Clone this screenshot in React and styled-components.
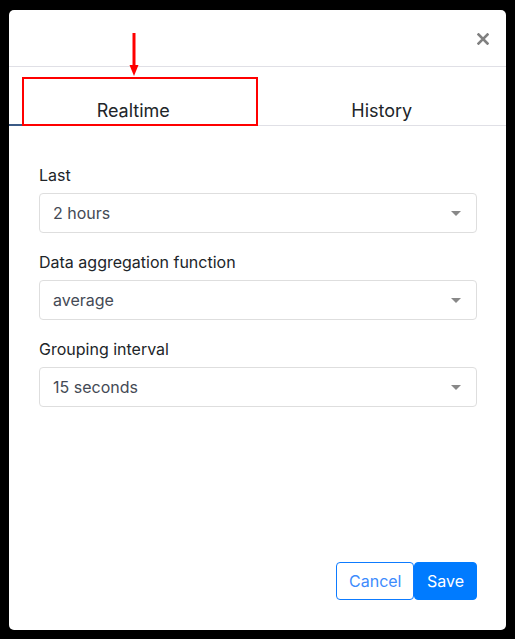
import React from "react";
import styled, { createGlobalStyle } from "styled-components";

const GlobalStyle = createGlobalStyle`
  html, body {
    margin: 0;
    padding: 0;
    background: #000;
    font-family: Inter, "Noto Sans", sans-serif;
  }
  * { box-sizing: border-box; }
`;

const fields = [
  { label: "Last", value: "2 hours" },
  { label: "Data aggregation function", value: "average" },
  { label: "Grouping interval", value: "15 seconds" },
];

const App = () => {
  return (
    <>
      <GlobalStyle />
      <Dialog>
        <Header>
          <Close aria-label="close">
            <svg width="12" height="12" viewBox="0 0 12 12">
              <path d="M1.5 1.5 L10.5 10.5 M10.5 1.5 L1.5 10.5" stroke="#808080" strokeWidth="2.6" strokeLinecap="square" />
            </svg>
          </Close>
        </Header>
        <Tabs>
          <Tab $active>Realtime</Tab>
          <Tab>History</Tab>
          <Highlight />
          <Arrow>
            <svg width="12" height="44" viewBox="0 0 12 44">
              <path d="M6 0 V33" stroke="#ff0000" strokeWidth="3" />
              <path d="M1.5 32 L10.5 32 L6 43 Z" fill="#ff0000" />
            </svg>
          </Arrow>
        </Tabs>
        <Body>
          {fields.map((f) => (
            <Field key={f.label}>
              <Label>{f.label}</Label>
              <Select>
                <span>{f.value}</span>
                <Caret />
              </Select>
            </Field>
          ))}
        </Body>
        <Footer>
          <OutlineButton>Cancel</OutlineButton>
          <PrimaryButton>Save</PrimaryButton>
        </Footer>
      </Dialog>
    </>
  );
};

const Dialog = styled.div`
  position: relative;
  margin: 10px 9px 0 9px;
  width: 497px;
  height: 620px;
  background: #fff;
  border-radius: 5px;
  display: flex;
  flex-direction: column;
`;

const Header = styled.div`
  height: 57px;
  border-bottom: 1px solid #e0e0e6;
  display: flex;
  justify-content: flex-end;
  align-items: center;
  padding-right: 17px;
`;

const Close = styled.button`
  border: none;
  background: none;
  padding: 0;
  width: 12px;
  height: 12px;
  display: flex;
  margin-top: 1px;
`;

const Tabs = styled.div`
  position: relative;
  display: flex;
  height: 59px;
  border-bottom: 1px solid #e0e0e6;
`;

const Tab = styled.div`
  flex: 1;
  display: flex;
  justify-content: center;
  align-items: flex-end;
  padding-bottom: 2px;
  font-size: 18px;
  color: #212529;
  margin-bottom: -1px;
  border-bottom: 2px solid ${({ $active }) => ($active ? "#3b5a85" : "transparent")};
  line-height: 22px;
`;

const Highlight = styled.div`
  position: absolute;
  left: 13px;
  top: 10px;
  width: 236px;
  height: 49px;
  border: 2px solid #ff0000;
  pointer-events: none;
`;

const Arrow = styled.div`
  position: absolute;
  left: 119px;
  top: -34px;
  display: flex;
`;

const Body = styled.div`
  padding: 38px 29px 0 30px;
`;

const Field = styled.div`
  display: flex;
  flex-direction: column;
  margin-bottom: 18px;
`;

const Label = styled.div`
  font-size: 16px;
  line-height: 22px;
  color: #212529;
  margin-bottom: 7px;
`;

const Select = styled.div`
  height: 40px;
  border: 1px solid #dedede;
  border-radius: 4px;
  display: flex;
  align-items: center;
  justify-content: space-between;
  padding: 0 15px 0 13px;
  font-size: 16px;
  color: #444a55;
`;

const Caret = styled.span`
  width: 0;
  height: 0;
  border-left: 5px solid transparent;
  border-right: 5px solid transparent;
  border-top: 5px solid #888;
`;

const Footer = styled.div`
  margin-top: auto;
  display: flex;
  justify-content: flex-end;
  padding: 0 29px 30px 0;
`;

const BaseButton = styled.button`
  height: 38px;
  font-family: Inter, "Noto Sans", sans-serif;
  font-size: 16px;
  border-radius: 4px;
  padding: 0 12px;
  cursor: pointer;
`;

const OutlineButton = styled(BaseButton)`
  width: 78px;
  background: #fff;
  color: #3d8bfd;
  border: 1px solid #0d7bff;
`;

const PrimaryButton = styled(BaseButton)`
  width: 63px;
  background: #007bff;
  color: #fff;
  border: 1px solid #007bff;
`;

export default App;
